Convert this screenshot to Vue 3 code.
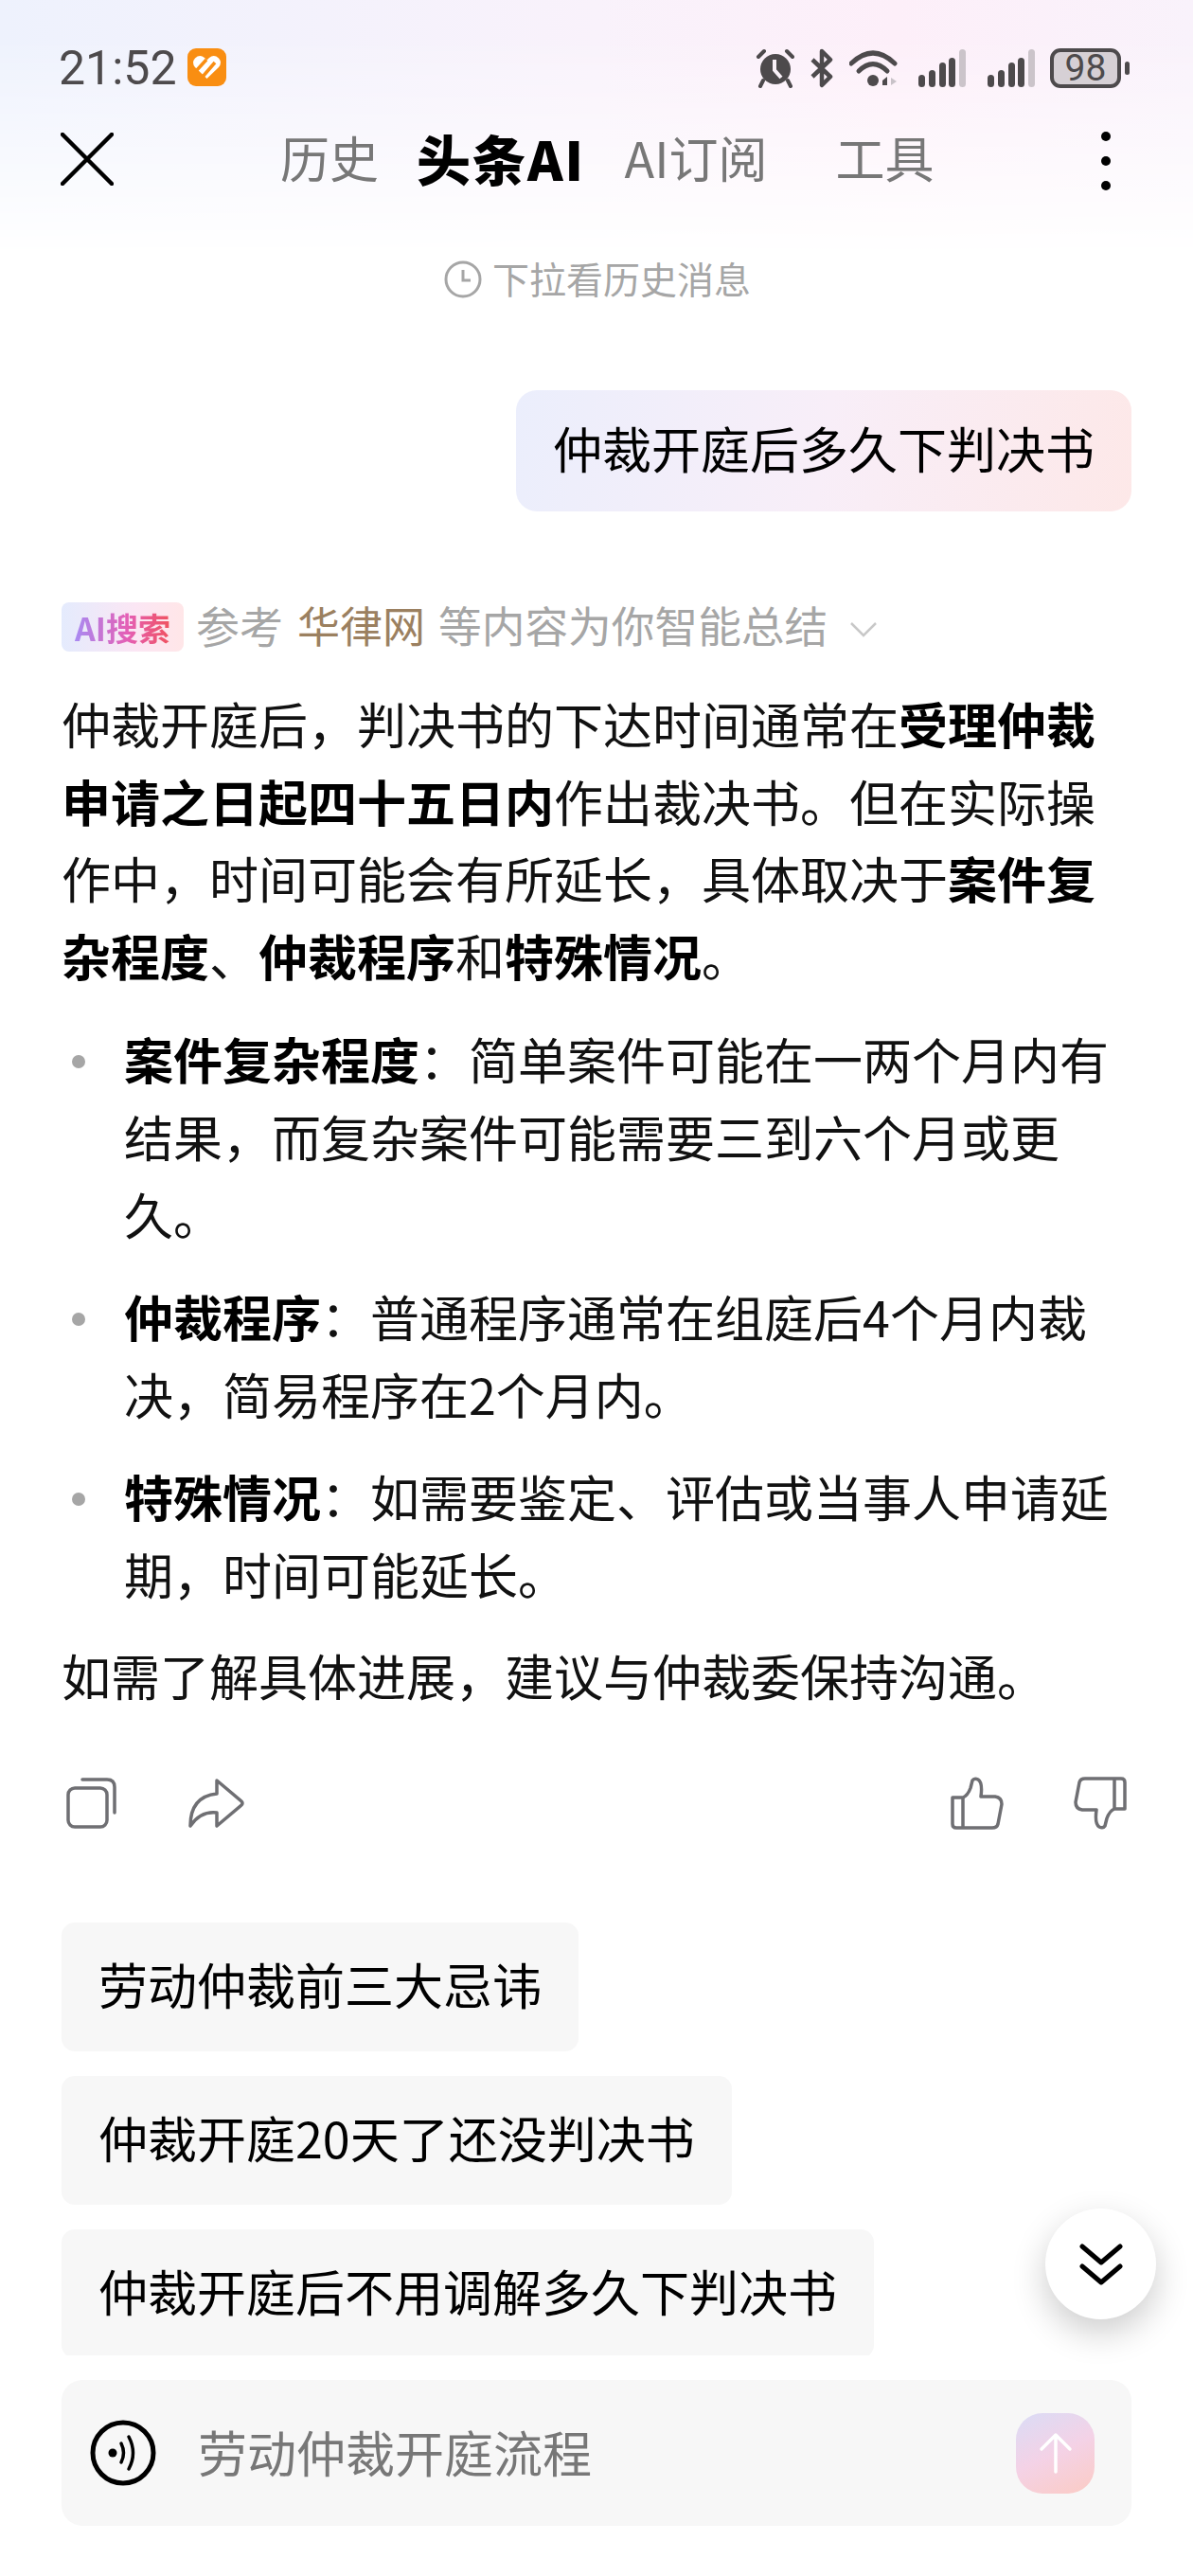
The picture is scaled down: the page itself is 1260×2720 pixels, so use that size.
<script setup>
const tabs = [
  { label: '历史', cls: 'tab-a' },
  { label: '头条AI', cls: 'tab-b active' },
  { label: 'AI订阅', cls: 'tab-c' },
  { label: '工具', cls: 'tab-d' },
]
const suggestions = ['劳动仲裁前三大忌讳', '仲裁开庭20天了还没判决书', '仲裁开庭后不用调解多久下判决书']
</script>

<template>
  <div class="page">
    <div class="top-glow"></div>

    <div class="status">
      <span class="time">21:52</span>
      <svg class="app-badge" width="41" height="40" viewBox="0 0 41 40">
        <rect width="41" height="40" rx="9" fill="#f98e12" />
        <path d="M20.5 32 L8 20 Q4 15 8 10.5 Q13 6 18 10 L20.5 12.5 L23 10 Q28 6 33 10.5 Q37 15 33 20 Z" fill="#fff" />
        <path d="M9 24 L20 12 M16 30 L29 15" stroke="#f98e12" stroke-width="3.5" fill="none" />
      </svg>
      <div class="status-icons">
        <svg width="42" height="42" viewBox="0 0 42 42">
          <circle cx="21" cy="22" r="16" fill="#4d4a4c" />
          <path d="M20 12 V23 L27 31" stroke="#f9f1f8" stroke-width="4" fill="none" />
          <path d="M3 9 L9 3 M33 3 L39 9 M8 34 L5 40 M34 34 L37 40" stroke="#4d4a4c" stroke-width="4" stroke-linecap="round" />
        </svg>
        <svg class="bt" width="26" height="42" viewBox="0 0 26 42">
          <path d="M3 12 L22 30 L13 39 L13 3 L22 12 L3 30" stroke="#4d4a4c" stroke-width="4.5" fill="none" stroke-linejoin="round" />
        </svg>
        <svg class="wifi" width="52" height="42" viewBox="0 0 52 42">
          <path d="M2 16 Q25 -6 48 16" stroke="#4d4a4c" stroke-width="5" fill="none" stroke-linecap="round" />
          <path d="M10 24 Q25 9 40 24" stroke="#4d4a4c" stroke-width="5" fill="none" stroke-linecap="round" />
          <circle cx="25" cy="34" r="6" fill="#4d4a4c" />
          <path d="M35 34 L40 30 V39 H35 Z" fill="#4d4a4c" />
          <path d="M44 31 L50 35 L44 39 Z" fill="#c8c2c8" />
        </svg>
        <svg class="signal" width="50" height="42" viewBox="0 0 50 42">
          <rect x="0" y="28" width="7" height="13" rx="3.5" fill="#4d4a4c" />
          <rect x="11" y="23" width="7" height="18" rx="3.5" fill="#4d4a4c" />
          <rect x="22" y="15" width="7" height="26" rx="3.5" fill="#4d4a4c" />
          <rect x="32" y="10" width="7" height="31" rx="3.5" fill="#4d4a4c" />
          <rect x="43" y="1" width="7" height="40" rx="3.5" fill="#cbc4ca" />
        </svg>
        <svg class="signal second" width="50" height="42" viewBox="0 0 50 42">
          <rect x="0" y="28" width="7" height="13" rx="3.5" fill="#4d4a4c" />
          <rect x="11" y="23" width="7" height="18" rx="3.5" fill="#4d4a4c" />
          <rect x="22" y="15" width="7" height="26" rx="3.5" fill="#4d4a4c" />
          <rect x="32" y="10" width="7" height="31" rx="3.5" fill="#4d4a4c" />
          <rect x="43" y="1" width="7" height="40" rx="3.5" fill="#cbc4ca" />
        </svg>
        <div class="battery">98</div>
        <div class="battery-tip"></div>
      </div>
    </div>

    <div class="nav">
      <svg class="close" width="56" height="56" viewBox="0 0 56 56">
        <path d="M2 2 L54 54 M54 2 L2 54" stroke="#000" stroke-width="4.5" stroke-linecap="round" />
      </svg>
      <div class="tabs">
        <span v-for="t in tabs" :key="t.label" class="tab" :class="t.cls">{{ t.label }}</span>
      </div>
      <div class="dots"><i></i><i></i><i></i></div>
    </div>

    <div class="hint">
      <svg width="40" height="40" viewBox="0 0 40 40">
        <circle cx="20" cy="20" r="18" stroke="#a6a6a6" stroke-width="3" fill="none" />
        <path d="M20 10 V21 H28" stroke="#a6a6a6" stroke-width="3" fill="none" />
      </svg>
      <span>下拉看历史消息</span>
    </div>

    <div class="bubble-row">
      <div class="bubble">仲裁开庭后多久下判决书</div>
    </div>

    <div class="source">
      <span class="ai-badge"><b>AI搜索</b></span>
      <span class="src-text">参考</span>
      <span class="src-link">华律网</span>
      <span class="src-text">等内容为你智能总结</span>
      <svg class="chev" width="30" height="17" viewBox="0 0 30 17">
        <path d="M2 2 L15 15 L28 2" stroke="#c8c8c8" stroke-width="2.5" fill="none" />
      </svg>
    </div>

    <p class="para first">仲裁开庭后，判决书的下达时间通常在<b>受理仲裁申请之日起四十五日内</b>作出裁决书。但在实际操作中，时间可能会有所延长，具体取决于<b>案件复杂程度</b>、<b>仲裁程序</b>和<b>特殊情况</b>。</p>

    <ul class="points">
      <li><b>案件复杂程度</b>：简单案件可能在一两个月内有结果，而复杂案件可能需要三到六个月或更久。</li>
      <li><b>仲裁程序</b>：普通程序通常在组庭后4个月内裁决，简易程序在2个月内。</li>
      <li><b>特殊情况</b>：如需要鉴定、评估或当事人申请延期，时间可能延长。</li>
    </ul>

    <p class="para last">如需了解具体进展，建议与仲裁委保持沟通。</p>

    <div class="actions">
      <svg class="a-copy" width="54" height="54" viewBox="0 0 54 54">
        <rect x="2" y="11" width="41" height="41" rx="7" stroke="#6f6f73" stroke-width="3.5" fill="none" />
        <path d="M17 2 H43 Q51 2 51 10 V37" stroke="#6f6f73" stroke-width="3.5" fill="none" stroke-linecap="round" />
      </svg>
      <svg class="a-share" width="60" height="54" viewBox="0 0 60 54">
        <path d="M31 3 L57 25 Q59 27 57 29 L31 51 V37 Q14 35 3 51 Q3 20 31 17 Z" stroke="#6f6f73" stroke-width="3.5" fill="none" stroke-linejoin="round" />
      </svg>
      <span class="grow"></span>
      <svg class="a-like" width="56" height="56" viewBox="0 0 56 56">
        <path d="M2 22 H13 Q18 20 21 12 L23 4 Q25 1 29 3 Q34 6 32 21 H47 Q54 22 54 29 L50 50 Q49 54 44 54 H6 Q2 54 2 50 Z" stroke="#6f6f73" stroke-width="3.5" fill="none" stroke-linejoin="round" />
        <path d="M13 22 V54" stroke="#6f6f73" stroke-width="3.5" />
      </svg>
      <svg class="a-dislike" width="56" height="56" viewBox="0 0 56 56">
        <path d="M54 34 H43 Q38 36 35 44 L33 52 Q31 55 27 53 Q22 50 24 35 H9 Q2 34 2 27 L6 6 Q7 2 12 2 H50 Q54 2 54 6 Z" stroke="#6f6f73" stroke-width="3.5" fill="none" stroke-linejoin="round" />
        <path d="M43 34 V2" stroke="#6f6f73" stroke-width="3.5" />
      </svg>
    </div>

    <div class="suggestions">
      <div v-for="s in suggestions" :key="s" class="chip">{{ s }}</div>
    </div>

    <div class="input">
      <svg width="70" height="70" viewBox="0 0 70 70">
        <circle cx="35" cy="35" r="32" stroke="#000" stroke-width="5" fill="none" />
        <circle cx="24" cy="35" r="4.5" fill="#000" />
        <path d="M33 25 Q38 35 33 45" stroke="#000" stroke-width="3.5" fill="none" stroke-linecap="round" />
        <path d="M41 18 Q50 35 41 52" stroke="#000" stroke-width="3.5" fill="none" stroke-linecap="round" />
      </svg>
      <span class="placeholder">劳动仲裁开庭流程</span>
      <div class="send">
        <svg width="36" height="44" viewBox="0 0 36 44">
          <path d="M18 42 V3 M3 18 L18 3 L33 18" stroke="#fff" stroke-width="3.5" fill="none" stroke-linecap="round" stroke-linejoin="round" />
        </svg>
      </div>
    </div>

    <div class="fab">
      <svg width="46" height="44" viewBox="0 0 46 44">
        <path d="M3 3 L23 20 L43 3 M3 24 L23 41 L43 24" stroke="#000" stroke-width="5" fill="none" stroke-linecap="round" stroke-linejoin="round" />
      </svg>
    </div>
  </div>
</template>

<style scoped>
.page {
  position: relative;
  width: 1260px;
  height: 2720px;
  overflow: hidden;
  background: #fff;
  color: #000;
  font-family: "Noto Sans CJK SC", "Noto Sans", sans-serif;
}
.top-glow {
  position: absolute;
  left: 0;
  top: 0;
  right: 0;
  height: 270px;
  background: linear-gradient(90deg, #eef2fd 0%, #f9f2fb 50%, #fdeff9 75%, #f9f2fb 100%);
  -webkit-mask-image: linear-gradient(180deg, #000 15%, transparent 100%);
  mask-image: linear-gradient(180deg, #000 15%, transparent 100%);
}
.status {
  position: relative;
  height: 48px;
  padding: 48px 0 0 62px;
  display: flex;
  align-items: center;
}
.time {
  font-family: Roboto, sans-serif;
  font-size: 50px;
  line-height: 48px;
  color: #4d4a4c;
  width: 136px;
}
.app-badge { margin-top: -2px; }
.status-icons {
  margin-left: auto;
  padding-right: 67px;
  display: flex;
  align-items: center;
}
.bt { margin-left: 15px; }
.wifi { margin-left: 16px; }
.signal { margin-left: 21px; }
.signal.second { margin-left: 23px; }
.battery {
  margin-left: 16px;
  width: 75px;
  height: 42px;
  box-sizing: border-box;
  border: 4px solid #4d4a4c;
  border-radius: 11px;
  background: #d6d0d5;
  color: #4d4a4c;
  font-family: Roboto, sans-serif;
  font-size: 39px;
  line-height: 34px;
  text-align: center;
}
.battery-tip {
  margin-left: 4px;
  width: 5px;
  height: 14px;
  border-radius: 3px;
  background: #4d4a4c;
}
.nav {
  position: relative;
  margin-top: 24px;
  height: 96px;
  padding-left: 64px;
  display: flex;
  align-items: center;
}
.tabs {
  margin-left: 176px;
  margin-top: -5px;
  display: flex;
  align-items: center;
}
.tab {
  font-size: 52px;
  line-height: 96px;
  color: #777;
  white-space: nowrap;
}
.tab-b { margin-left: 40px; }
.tab-c { margin-left: 42px; }
.tab-d { margin-left: 72px; }
.tab.active { color: #000; font-size: 57px; font-weight: 900; letter-spacing: 1.5px; }
.dots {
  position: absolute;
  left: 1163px;
  top: 19px;
  display: flex;
  flex-direction: column;
  gap: 16px;
}
.dots i {
  display: block;
  width: 10px;
  height: 10px;
  border-radius: 50%;
  background: #000;
}
.hint {
  position: relative;
  margin-top: 55px;
  height: 48px;
  padding-left: 469px;
  display: flex;
  align-items: center;
  gap: 11px;
  font-size: 39px;
  color: #a6a6a6;
}
.hint span { margin-top: -4px; }
.bubble-row {
  margin-top: 93px;
  padding-right: 65px;
  display: flex;
  justify-content: flex-end;
}
.bubble {
  padding: 0 39px;
  height: 128px;
  line-height: 122px;
  font-size: 52px;
  border-radius: 22px;
  background: linear-gradient(100deg, #ebeefc 0%, #f8eef8 50%, #fde8e8 100%);
}
.source {
  margin-top: 96px;
  height: 52px;
  padding-left: 65px;
  display: flex;
  align-items: center;
  font-size: 46px;
  white-space: nowrap;
}
.ai-badge {
  width: 129px;
  height: 52px;
  border-radius: 8px;
  background: linear-gradient(90deg, #e4ebfd 0%, #fbe6f4 60%, #ffe6e8 100%);
  display: flex;
  align-items: center;
  justify-content: center;
  margin-right: 13px;
}
.ai-badge b {
  font-size: 34px;
  font-weight: 700;
  background: linear-gradient(90deg, #a98af2 0%, #e45fb5 55%, #f0525f 100%);
  -webkit-background-clip: text;
  background-clip: text;
  color: transparent;
}
.src-text { color: #a6a6a6; padding-bottom: 6px; }
.src-link { color: #9b8060; margin: 0 14px 0 15px; padding-bottom: 6px; font-size: 45px; }
.chev { margin-left: 23px; margin-top: 4px; }
.src-text:last-of-type { font-size: 45.7px; }
.para {
  margin: 0;
  padding: 0 55px 0 65px;
  font-size: 52px;
  line-height: 81.6px;
  color: #111;
}
.para b, .points b { color: #000; font-weight: 700; }
.para.first { margin-top: 35px; }
.para.last { margin-top: 25px; }
.points {
  list-style: none;
  margin: 28px 0 0;
  padding: 0 60px 0 131px;
  font-size: 52px;
  line-height: 81.6px;
  color: #111;
  display: flex;
  flex-direction: column;
  gap: 27px;
}
.points li { position: relative; }
.points li::before {
  content: "";
  position: absolute;
  left: -55px;
  top: 37px;
  width: 14px;
  height: 14px;
  border-radius: 50%;
  background: #a6a6a6;
}
.actions {
  margin-top: 65px;
  height: 60px;
  padding: 0 70px 0 70px;
  display: flex;
  align-items: center;
}
.a-share { margin-left: 74px; }
.a-dislike { margin-left: 74px; }
.grow { flex: 1; }
.suggestions {
  margin: 96px 0 0 65px;
  height: 457px;
  overflow: hidden;
  display: flex;
  flex-direction: column;
  align-items: flex-start;
  gap: 26px;
}
.chip {
  flex: none;
  padding: 0 39px;
  height: 136px;
  line-height: 129px;
  font-size: 52px;
  border-radius: 14px;
  background: #f7f7f7;
  white-space: nowrap;
}
.input {
  margin: 26px 65px 0;
  height: 154px;
  padding: 0 39px 0 30px;
  border-radius: 22px;
  background: #f7f7f7;
  display: flex;
  align-items: center;
}
.placeholder {
  margin: -4px 0 0 44px;
  font-size: 52px;
  color: #777;
}
.send {
  margin-left: auto;
  width: 83px;
  height: 85px;
  border-radius: 28px;
  background: linear-gradient(155deg, #dadcf6 0%, #f4d2e6 50%, #fbcbc4 100%);
  display: flex;
  align-items: center;
  justify-content: center;
}
.fab {
  position: absolute;
  left: 1104px;
  top: 2332px;
  width: 117px;
  height: 117px;
  border-radius: 50%;
  background: #fff;
  box-shadow: 0 14px 36px rgba(0, 0, 0, 0.2);
  display: flex;
  align-items: center;
  justify-content: center;
}
</style>
